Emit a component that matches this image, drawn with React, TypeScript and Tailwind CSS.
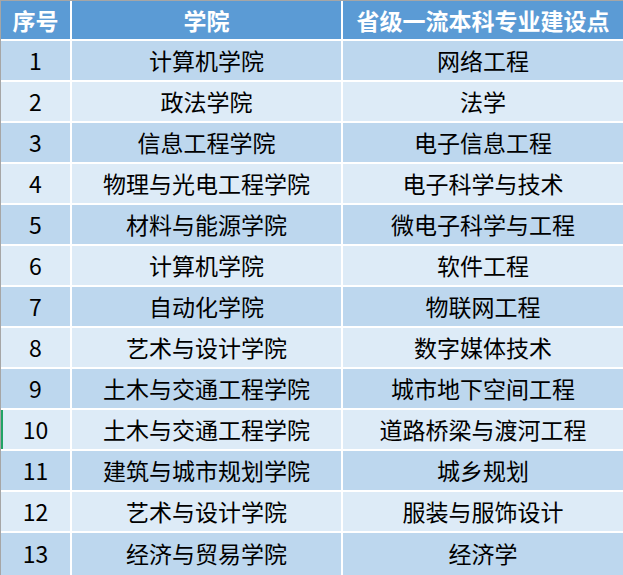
import React from 'react';

const rows: [string, string, string][] = [
    ['1', '计算机学院', '网络工程'],
    ['2', '政法学院', '法学'],
    ['3', '信息工程学院', '电子信息工程'],
    ['4', '物理与光电工程学院', '电子科学与技术'],
    ['5', '材料与能源学院', '微电子科学与工程'],
    ['6', '计算机学院', '软件工程'],
    ['7', '自动化学院', '物联网工程'],
    ['8', '艺术与设计学院', '数字媒体技术'],
    ['9', '土木与交通工程学院', '城市地下空间工程'],
    ['10', '土木与交通工程学院', '道路桥梁与渡河工程'],
    ['11', '建筑与城市规划学院', '城乡规划'],
    ['12', '艺术与设计学院', '服装与服饰设计'],
    ['13', '经济与贸易学院', '经济学'],
];

export default function App() {
    return (
        <div
            className="w-[623px] h-[575px] bg-white border-t border-l border-[#a6a6a6] overflow-hidden"
            style={{ fontFamily: '"Microsoft YaHei", "Noto Sans CJK SC", sans-serif' }}
        >
            <div className="grid grid-cols-[69px_269px_1fr] gap-[2px] text-[23px] leading-none">
                {/* Header */}
                <div className="h-[38px] bg-[#5b9bd5] text-white font-bold flex items-center justify-center">序号</div>
                <div className="h-[38px] bg-[#5b9bd5] text-white font-bold flex items-center justify-center">学院</div>
                <div className="h-[38px] bg-[#5b9bd5] text-white font-bold flex items-center justify-center">省级一流本科专业建设点</div>

                {rows.map(([no, college, major], i) => {
                    const bg = i % 2 === 0 ? 'bg-[#bdd7ee]' : 'bg-[#ddebf7]';
                    const h = i === rows.length - 1 ? 'h-[42px] pb-[2px]' : 'h-[39px]';
                    return (
                        <React.Fragment key={no}>
                            <div className={`${h} ${bg} text-black flex items-center justify-center relative`}>
                                {no === '10' && <span className="absolute left-0 top-0 bottom-0 w-[2px] bg-[#21a366]" />}
                                {no}
                            </div>
                            <div className={`${h} ${bg} text-black flex items-center justify-center`}>{college}</div>
                            <div className={`${h} ${bg} text-black flex items-center justify-center`}>{major}</div>
                        </React.Fragment>
                    );
                })}
            </div>
        </div>
    );
}
